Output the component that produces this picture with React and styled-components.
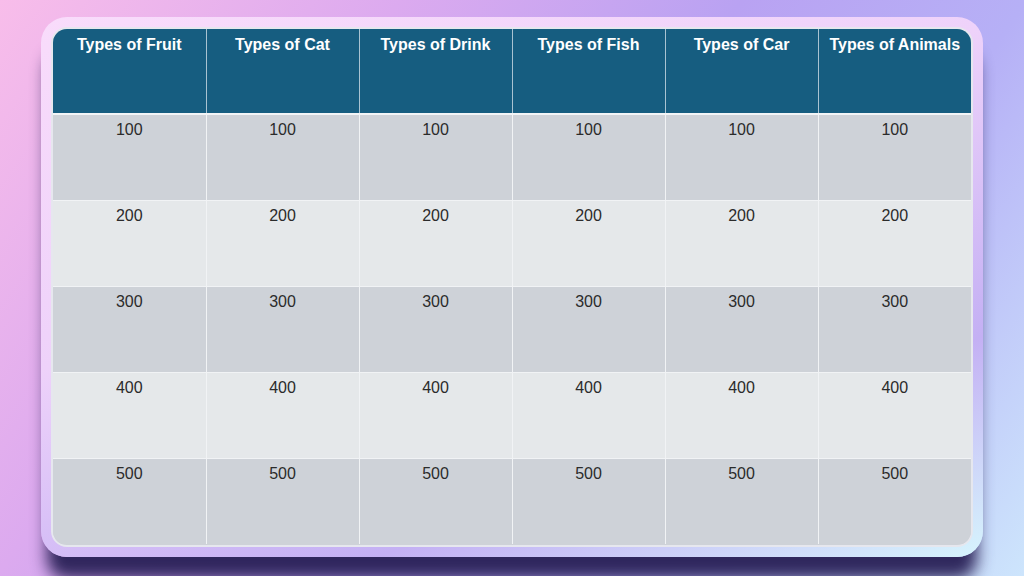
import styled, { createGlobalStyle } from "styled-components";

const CATEGORIES = [
  "Types of Fruit",
  "Types of Cat",
  "Types of Drink",
  "Types of Fish",
  "Types of Car",
  "Types of Animals",
];

const VALUES = [100, 200, 300, 400, 500];

const GlobalStyle = createGlobalStyle`
  html, body {
    margin: 0;
    padding: 0;
  }
  body {
    font-family: "Liberation Sans", Arial, sans-serif;
  }
`;

function App() {
  return (
    <>
      <GlobalStyle />
      <Page>
        <Frame>
          <Board>
            <StyledTable>
              <thead>
                <HeaderRow>
                  {CATEGORIES.map((c) => (
                    <HeaderCell key={c}>{c}</HeaderCell>
                  ))}
                </HeaderRow>
              </thead>
              <tbody>
                {VALUES.map((v, i) => (
                  <Row key={v} $alt={i % 2 === 1}>
                    {CATEGORIES.map((c) => (
                      <ValueCell key={c}>{v}</ValueCell>
                    ))}
                  </Row>
                ))}
              </tbody>
            </StyledTable>
          </Board>
        </Frame>
      </Page>
    </>
  );
}

export default App;

const Page = styled.div`
  width: 1024px;
  height: 576px;
  box-sizing: border-box;
  padding: 17px 41px 0 41px;
  overflow: hidden;
  background: linear-gradient(
    125deg,
    #f8bdea 0%,
    #dcaaef 28%,
    #b9a2f2 52%,
    #b6b0f6 72%,
    #cde5fc 100%
  );
`;

const Frame = styled.div`
  width: 942px;
  height: 540px;
  box-sizing: border-box;
  padding: 10px;
  border-radius: 26px;
  background: linear-gradient(
    160deg,
    #f9dcfb 0%,
    #eed2fa 40%,
    #c4b0f4 75%,
    #d6f4fd 100%
  );
  box-shadow: 0 28px 16px -6px rgba(40, 32, 85, 0.95);
`;

const Board = styled.div`
  width: 100%;
  height: 100%;
  box-sizing: border-box;
  border: 2px solid #e6e7ee;
  border-radius: 16px;
  overflow: hidden;
  background: #ced2d8;
`;

const StyledTable = styled.table`
  width: 100%;
  border-collapse: collapse;
  border-spacing: 0;
  table-layout: fixed;
`;

const HeaderRow = styled.tr`
  height: 85px;
`;

const HeaderCell = styled.th`
  padding: 7px 2px 0;
  vertical-align: top;
  text-align: center;
  background: #165d80;
  color: #ffffff;
  font-size: 16px;
  font-weight: 700;
  border-left: 1px solid #a9c3d2;
  border-bottom: 2px solid #f2f4f6;

  &:first-child {
    border-left: none;
  }
`;

const Row = styled.tr`
  height: 86px;
  background: ${(p) => (p.$alt ? "#e5e8ea" : "#ced2d8")};
`;

const ValueCell = styled.td`
  padding: 6px 2px 0;
  vertical-align: top;
  text-align: center;
  color: #2b2b2b;
  font-size: 16px;
  border-left: 1px solid #f1f3f5;
  border-top: 1px solid #f1f3f5;

  &:first-child {
    border-left: none;
  }
`;
